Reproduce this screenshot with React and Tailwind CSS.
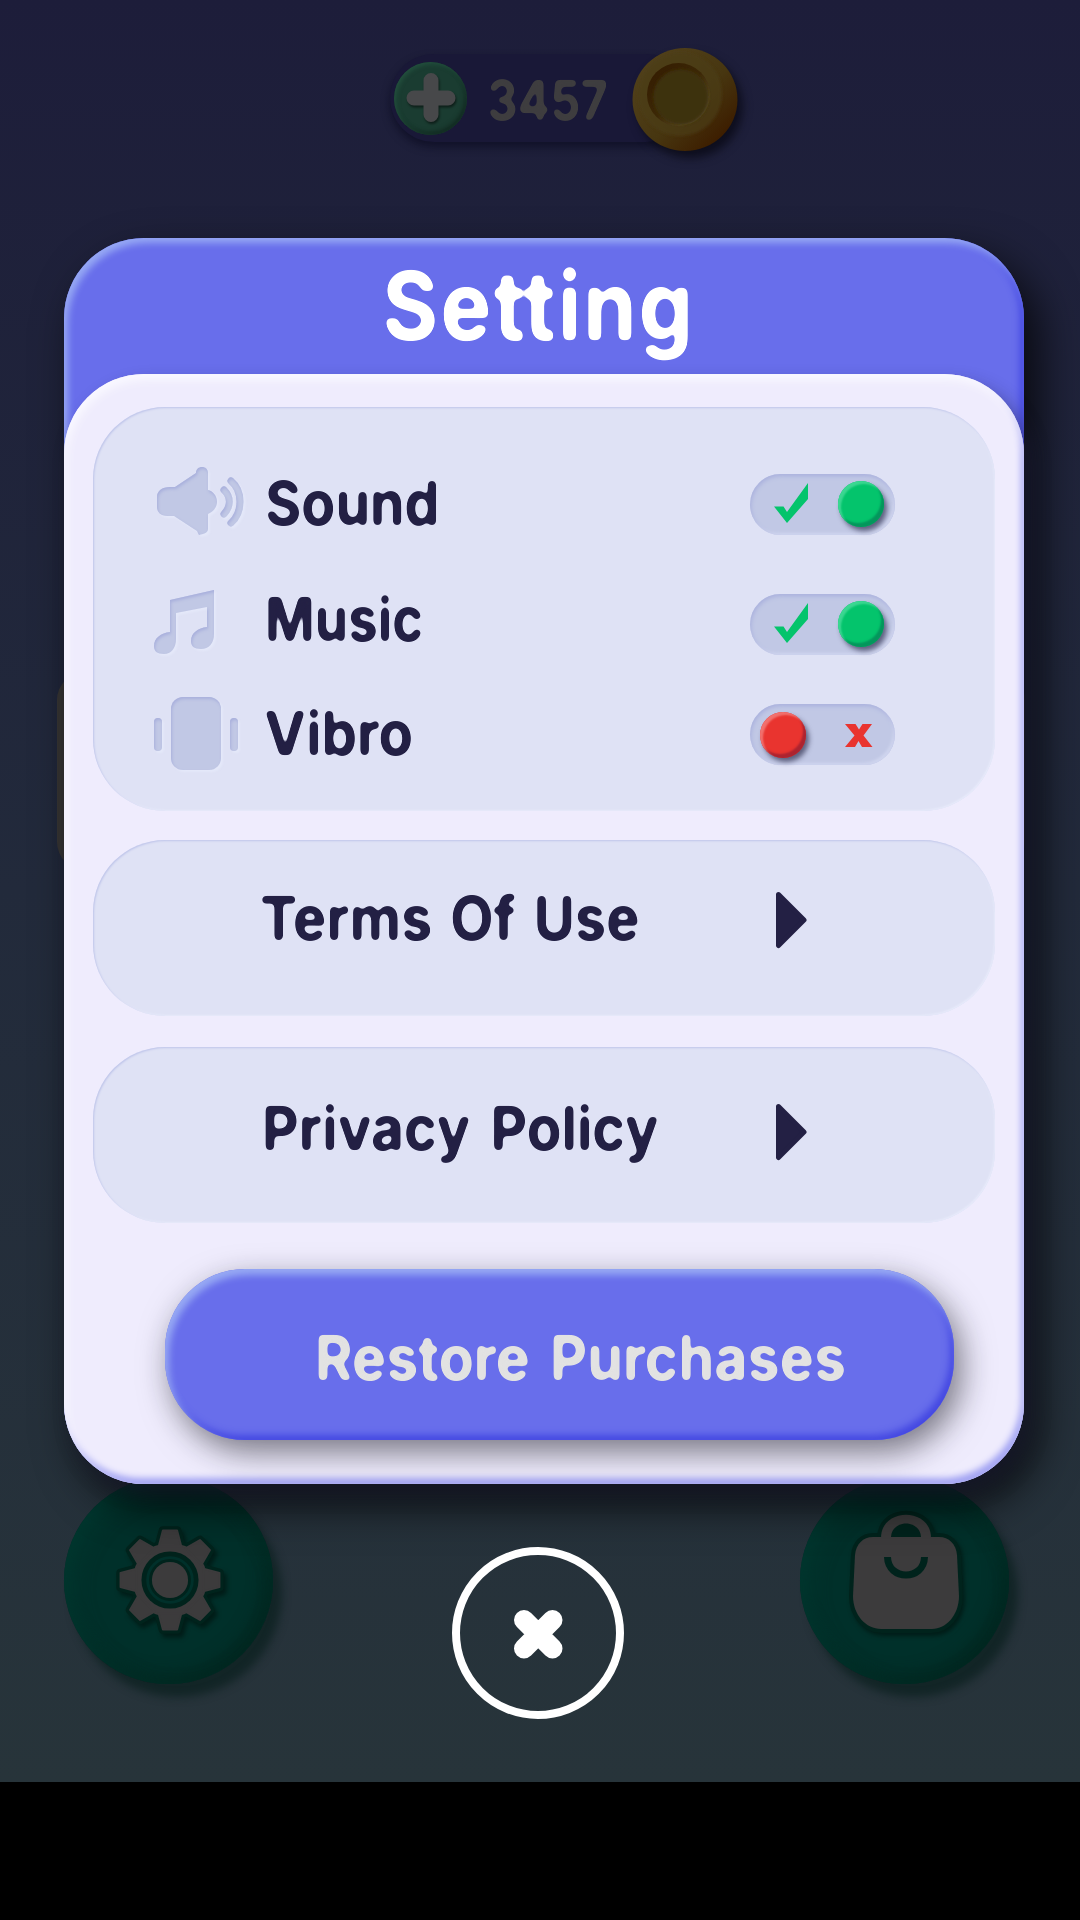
const SoundIcon = () => (
  <svg width="92" height="72" viewBox="0 0 92 72" className="mb-[3px] ml-px drop-shadow-[2px_2px_1px_#e4e8f9]">
    <g filter="url(#engrave)">
      <path
        fill="#c1c8e5"
        d="M16 21H21L42 7C42 3 45 1 48 1C51 1 54 3 54 7V24C59 25 63 30 63 36C63 41 59 46 54 48V63C54 67 49 68 45 69L43 65L20 50H13C7 50 3 46 3 41V31C3 25 8 21 16 21Z"
      />
      <path fill="none" stroke="#c1c8e5" strokeWidth="7" strokeLinecap="round" d="M70 24C77 31 77 40 70 48" />
      <path fill="none" stroke="#c1c8e5" strokeWidth="7" strokeLinecap="round" d="M77 15C89 25 89 46 77 57" />
    </g>
  </svg>
);

const MusicIcon = () => (
  <svg width="66" height="68" viewBox="0 0 66 68" className="mt-1.5 drop-shadow-[2px_2px_1px_#e4e8f9]">
    <path
      filter="url(#engrave)"
      fill="#c1c8e5"
      d="M17 12L61 2V46C61 55 56 61 48 61C41 61 38 58 38 53C38 45 45 40 54 39V19L23 25V51C23 60 18 66 11 66C4 66 1 63 1 58C1 50 8 45 17 44Z"
    />
  </svg>
);

const VibroIcon = () => (
  <svg width="90" height="80" viewBox="0 0 90 80" className="drop-shadow-[2px_2px_1px_#e4e8f9]">
    <g fill="#c1c8e5" filter="url(#engrave)">
      <rect x="1" y="23" width="8" height="33" rx="4" />
      <rect x="18" y="2" width="50" height="73" rx="12" />
      <rect x="77" y="23" width="8" height="33" rx="4" />
    </g>
  </svg>
);

const Filters = () => (
  <svg width="0" height="0" className="absolute">
    <defs>
      <filter id="round" colorInterpolationFilters="sRGB" x="-5%" y="-10%" width="110%" height="120%">
        <feGaussianBlur stdDeviation="2.4" />
        <feComponentTransfer><feFuncA type="linear" slope="7" intercept="-2.9" /></feComponentTransfer>
      </filter>
      <filter id="round-lg" colorInterpolationFilters="sRGB" x="-5%" y="-10%" width="110%" height="120%">
        <feGaussianBlur stdDeviation="3.2" />
        <feComponentTransfer><feFuncA type="linear" slope="9" intercept="-3.8" /></feComponentTransfer>
      </filter>
      <filter id="engrave" colorInterpolationFilters="sRGB">
        <feOffset in="SourceAlpha" dx="1.2" dy="2" result="o" />
        <feGaussianBlur in="o" stdDeviation="1.6" result="b" />
        <feComposite in="SourceAlpha" in2="b" operator="out" result="edge" />
        <feFlood floodColor="#a8afdc" result="c" />
        <feComposite in="c" in2="edge" operator="in" result="shade" />
        <feMerge><feMergeNode in="SourceGraphic" /><feMergeNode in="shade" /></feMerge>
      </filter>
    </defs>
  </svg>
);

const Toggle = ({ on }) => (
  <div className="flex h-[61px] w-[145px] items-center rounded-full bg-[#c1c8e5] shadow-[inset_1px_2px_4px_#a9b0dd,inset_-2px_-2px_3px_#d3d8f0]">
    {on ? (
      <>
        <svg width="34" height="40" viewBox="0 0 34 40" className="ml-6 mb-1">
          <path fill="#04c46c" d="M0 23.5H9.5L13 29L34 0V16L13 40Z" />
        </svg>
        <div className="ml-[30px] mb-0.5 size-[46px] rounded-full bg-[#04c46c] shadow-[3px_4px_5px_rgba(40,40,70,.65),inset_3px_3px_2px_#3cd792,inset_-3px_-4px_2px_#04965c]" />
      </>
    ) : (
      <>
        <div className="ml-2.5 mt-0.5 size-[46px] rounded-full bg-[#e9342f] shadow-[3px_4px_5px_rgba(40,40,70,.65),inset_3px_3px_2px_#f1716e,inset_-3px_-4px_2px_#ac2430]" />
        <svg width="28" height="23" viewBox="0 0 28 23" className="ml-[39px] mt-0.5">
          <path fill="#e9342f" d="M0 0H10.5L14 5.5L17.5 0H27L18.5 11.5L27.5 23H17L13.5 17L10 23H0L9.5 11.5Z" />
        </svg>
      </>
    )}
  </div>
);

const label = "inline-block origin-left whitespace-nowrap text-[61px] leading-[72px] font-bold text-[#232044] [filter:url(#round)]";

const Arrow = () => (
  <svg width="32" height="58" viewBox="0 0 32 58">
    <path fill="#232044" stroke="#232044" strokeWidth="5" strokeLinejoin="round" d="M3.5 3.5L29 29L3.5 54.5Z" />
  </svg>
);

const panel = "shrink-0 rounded-[72px] bg-[#dfe2f5] shadow-[inset_1px_1px_2px_#bfc5ea,inset_-1px_-1px_2px_#e9ecfb]";

const Gear = () => {
  const teeth = [0, 45, 90, 135, 180, 225, 270, 315];
  return (
    <svg width="118" height="118" viewBox="-62 -62 124 124" className="mb-px ml-0.5 drop-shadow-[3px_4px_2px_rgba(0,20,15,.7)]">
      {["#00231c", "#3c3b3c"].map((c, i) => (
        <g key={c} fill={c} stroke={c} strokeWidth={i ? 2 : 9} strokeLinejoin="round">
          <circle r="38" />
          {teeth.map((a) => (
            <path key={a} transform={`rotate(${a})`} d="M-12 -35L-7.5 -52H7.5L12 -35Z" />
          ))}
        </g>
      ))}
      <circle r="30" fill="#00231c" />
      <circle r="23.5" fill="none" stroke="#00302a" strokeWidth="3" />
      <circle r="19" fill="#3c3b3c" />
    </svg>
  );
};

const Bag = () => (
  <svg width="124" height="130" viewBox="0 0 124 130" className="ml-[3px] drop-shadow-[2px_3px_2px_rgba(0,20,15,.7)]">
    {["#00231c", "#3c3b3c"].map((c, i) => (
      <g key={c} stroke={c} strokeWidth={i ? 0 : 8} fill={c}>
        <path d="M29 29H95C105 29 112 36 113 47L115 88C115 107 102 121 88 121H37C22 121 9 107 9 88L11 47C12 36 19 29 29 29Z" />
        <path d="M37 30C37 -1 87 -1 87 30Z" />
      </g>
    ))}
    <path fill="#00231c" d="M47 29C48 11 76 11 77 29Z" />
    <path fill="none" stroke="#00231c" strokeWidth="7" d="M43.5 49C44 73 80 73 80.5 49" />
  </svg>
);

const round =
  "flex h-[207px] w-[209px] items-center justify-center rounded-full bg-[#00302a] shadow-[9px_13px_8px_rgba(10,32,30,.7),inset_8px_8px_20px_#00372f,inset_-6px_-6px_18px_#00241d]";

export default function App() {
  return (
    <div className="grid h-[1920px] w-[1080px] grid-cols-1 overflow-hidden bg-black font-['Inter',sans-serif]">
      <Filters />
      <div className="flex h-[1782px] flex-col bg-linear-to-b from-[#1d1d3a] via-[#222a3b] to-[#27343a] [grid-area:1/1]">
        <header className="mt-[48px] ml-[390px] flex h-[104px] items-center">
          <div className="mb-1 flex h-[88px] w-[300px] items-center rounded-full bg-[#191837] pl-1 shadow-[0_5px_8px_rgba(8,8,28,.6)]">
            <div className="flex size-[73px] items-center justify-center rounded-full bg-[#1a3c31] shadow-[inset_2px_2px_4px_#23503e,inset_-2px_-3px_4px_#122b22]">
              <svg width="54" height="54" viewBox="0 0 54 54" className="drop-shadow-[1px_2px_1px_rgba(0,0,0,.5)]">
                <path stroke="#47484a" strokeWidth="15" strokeLinecap="round" d="M27 9.5V43.5M10 27H44" />
              </svg>
            </div>
            <span className="mt-[5px] ml-[20px] inline-block origin-left scale-x-[.865] text-[55px] leading-none font-bold text-[#3e3d3f] [filter:url(#round)]">3457</span>
          </div>
          <svg width="120" height="116" viewBox="0 0 120 116" className="z-10 -ml-[60px] shrink-0 drop-shadow-[5px_7px_5px_rgba(5,5,15,.7)]">
            <defs>
              <linearGradient id="coin" x1="0" y1="0" x2="1" y2="1">
                <stop offset="0" stopColor="#54441f" /><stop offset=".55" stopColor="#473610" /><stop offset=".85" stopColor="#3d1e00" /><stop offset="1" stopColor="#331700" />
              </linearGradient>
              <linearGradient id="rim" x1="0" y1="0" x2="1" y2="1">
                <stop offset="0" stopColor="#331a00" /><stop offset=".5" stopColor="#3c2806" /><stop offset="1" stopColor="#6a5c38" />
              </linearGradient>
              <filter id="soft"><feGaussianBlur stdDeviation="1.5" /></filter>
            </defs>
            <ellipse cx="55" cy="57.5" rx="52.5" ry="51.5" fill="url(#coin)" />
            <circle cx="50" cy="52" r="42" fill="#4c3c12" opacity=".7" filter="url(#soft)" />
            <circle cx="48.5" cy="52.5" r="31.5" fill="url(#rim)" />
            <circle cx="51" cy="55" r="27.5" fill="#3d3011" filter="url(#soft)" />
          </svg>
        </header>
        <div className="mt-[520px] ml-[57px] h-[198px] w-[968px] rounded-[28px] bg-[#393735]" />
        <footer className="mt-[607px] flex justify-between pr-[71px] pl-[64px]">
          <div className={round}><Gear /></div>
          <div className={round}><div className="-mt-4"><Bag /></div></div>
        </footer>
      </div>

      <div className="z-20 flex flex-col [grid-area:1/1]">
        <main className="mt-[238px] ml-[64px] flex h-[1246px] w-[960px] flex-col rounded-[80px] bg-[#686eeb] shadow-[14px_20px_44px_rgba(0,0,0,.75),inset_4px_5px_7px_#97a9f4,inset_-4px_-2px_7px_#4448e2]">
          <h1 className="flex h-[136px] justify-center pt-[12px] pr-[11px]">
            <span className="inline-block scale-x-[.9] text-[95px] leading-[112px] font-bold tracking-[2.5px] text-white [filter:url(#round-lg)]">Setting</span>
          </h1>
          <section className="flex h-[1110px] flex-col rounded-[80px] bg-[#efecfd] px-[29px] pt-[33px] shadow-[8px_10px_18px_rgba(30,30,60,.45),inset_3px_6px_8px_#f9f8ff,inset_-3px_-6px_6px_#a3a4f3]">
            <div className={panel + " h-[404px] pt-[58px] pl-[60px]"}>
              <div className="flex h-[76px] items-center">
                <div className="w-[112px]"><SoundIcon /></div>
                <div className="w-[485px]"><span className={label + " scale-x-[.91]"}>Sound</span></div>
                <div className="mt-[3px]"><Toggle on /></div>
              </div>
              <div className="mt-[40px] flex h-[76px] items-center">
                <div className="w-[112px]"><MusicIcon /></div>
                <div className="w-[485px]"><span className={label + " scale-x-[.875]"}>Music</span></div>
                <div className="mt-[11px]"><Toggle on /></div>
              </div>
              <div className="mt-[38px] flex h-[76px] items-center">
                <div className="w-[111px] pt-[4px]"><VibroIcon /></div>
                <div className="w-[486px]"><span className={label + " scale-x-[.925]"}>Vibro</span></div>
                <div className="mt-0.5"><Toggle /></div>
              </div>
            </div>
            <div className={panel + " mt-[29px] flex h-[176px] pt-[42px] pl-[167px]"}>
              <div className="w-[515px]"><span className={label + " scale-x-[.92] [word-spacing:5px]"}>Terms Of Use</span></div>
              <div className="pt-[9px]"><Arrow /></div>
            </div>
            <div className={panel + " mt-[31px] flex h-[176px] pt-[45px] pl-[169px]"}>
              <div className="w-[513px]"><span className={label + " scale-x-[.93] [word-spacing:7px]"}>Privacy Policy</span></div>
              <div className="pt-[11px]"><Arrow /></div>
            </div>
            <button className="mt-[46px] ml-[72px] flex h-[171px] w-[789px] shrink-0 rounded-[80px] bg-[#686eeb] pt-[52px] pl-[150px] shadow-[7px_12px_32px_rgba(20,20,30,.55),inset_4px_6px_7px_#97a9f4,inset_-4px_-5px_7px_#4448e2]">
              <span className="inline-block origin-left scale-x-[.925] whitespace-nowrap text-[62px] leading-[74px] font-bold text-[#e2e2e2] [filter:url(#round)] [word-spacing:7px]">Restore Purchases</span>
            </button>
          </section>
        </main>
        <button className="mt-[63px] ml-[452px] flex size-[172px] items-center justify-center rounded-full border-8 border-white">
          <svg width="52" height="52" viewBox="0 0 52 52">
            <path stroke="#fff" strokeWidth="20" strokeLinecap="round" d="M12 13L40.5 41.5M40.5 13L12 41.5" />
          </svg>
        </button>
      </div>
    </div>
  );
}
